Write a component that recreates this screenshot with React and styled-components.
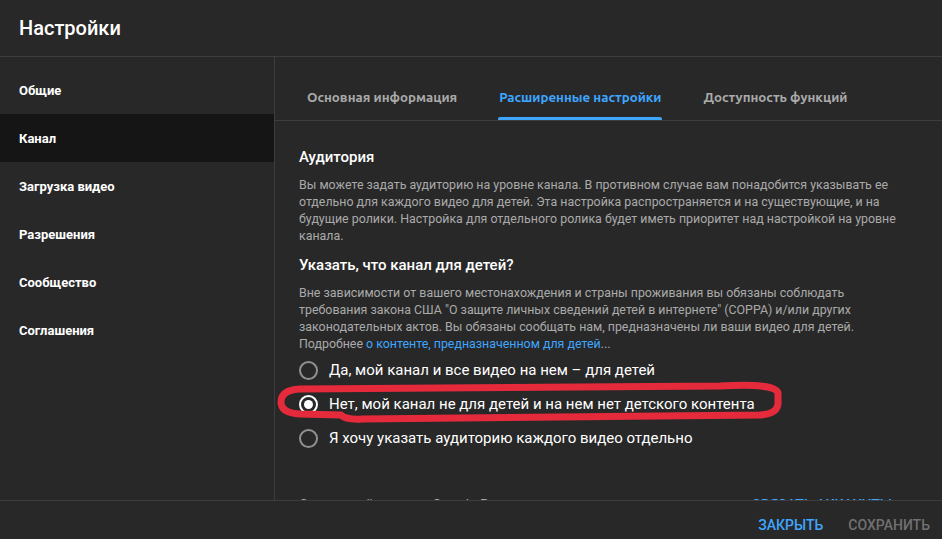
import React from "react";
import styled, { createGlobalStyle } from "styled-components";

const GlobalStyle = createGlobalStyle`
  html, body { margin: 0; padding: 0; background: #282828; }
  body { font-family: Roboto, "Noto Sans", Arial, sans-serif; color: #fff; }
  * { box-sizing: border-box; }
`;

const Dialog = styled.div`
  width: 942px;
  height: 539px;
  display: flex;
  flex-direction: column;
  background: #282828;
  overflow: hidden;
`;

const Header = styled.header`
  height: 57px;
  flex: none;
  display: flex;
  align-items: center;
  padding: 0 19px;
  border-bottom: 1px solid #3d3d3d;
`;

const Title = styled.h1`
  margin: 0;
  font-size: 20px;
  font-weight: 500;
  color: #fff;
`;

const Body = styled.div`
  flex: 1;
  display: flex;
  min-height: 0;
`;

const Sidebar = styled.nav`
  width: 275px;
  flex: none;
  padding-top: 9px;
  border-right: 1px solid #3d3d3d;
  display: flex;
  flex-direction: column;
`;

const NavItem = styled.div`
  height: 48px;
  display: flex;
  align-items: center;
  padding: 0 19px;
  font-size: 13px;
  font-weight: 700;
  color: #fff;
  background: ${(p) => (p.$active ? "#151515" : "transparent")};
`;

const Main = styled.div`
  flex: 1;
  display: flex;
  flex-direction: column;
  min-width: 0;
  position: relative;
`;

const Tabs = styled.div`
  height: 64px;
  flex: none;
  display: flex;
  align-items: stretch;
  gap: 42px;
  padding-left: 32px;
  border-bottom: 1px solid #3d3d3d;
`;

const Tab = styled.div`
  position: relative;
  display: flex;
  align-items: center;
  padding-top: 17px;
  font-family: Ubuntu, "Noto Sans", Roboto, sans-serif;
  font-size: 13.3px;
  font-weight: 600;
  color: ${(p) => (p.$active ? "#3ea6ff" : "#aaaaaa")};
  &::after {
    content: "";
    display: ${(p) => (p.$active ? "block" : "none")};
    position: absolute;
    left: -1px;
    right: 0;
    bottom: 0;
    height: 3px;
    border-radius: 2px 2px 0 0;
    background: #3ea6ff;
  }
`;

const Content = styled.div`
  flex: 1;
  overflow: hidden;
  padding: 26px 24px 0 24px;
  position: relative;
`;

const SectionTitle = styled.h2`
  margin: 0 0 9px;
  font-size: 15px;
  font-weight: 500;
  color: #fff;
  line-height: 20px;
`;

const Paragraph = styled.p`
  margin: 0 0 ${(p) => p.$mb || 0}px;
  font-size: 12.4px;
  line-height: 17px;
  color: #aaaaaa;
  max-width: 600px;
`;

const Link = styled.a`
  color: #3ea6ff;
  text-decoration: none;
`;

const Options = styled.div`
  display: flex;
  flex-direction: column;
  margin-top: 1px;
`;

const Option = styled.label`
  height: 34px;
  display: flex;
  align-items: center;
  gap: 11px;
  font-size: 15px;
  color: #fff;
`;

const Radio = styled.span`
  width: 19px;
  height: 19px;
  flex: none;
  border-radius: 50%;
  border: 2px solid ${(p) => (p.$checked ? "#fff" : "#909090")};
  display: flex;
  align-items: center;
  justify-content: center;
  &::after {
    content: "";
    width: 9px;
    height: 9px;
    border-radius: 50%;
    background: #fff;
    display: ${(p) => (p.$checked ? "block" : "none")};
  }
`;

const LinkedRow = styled.div`
  margin-top: 42px;
  display: flex;
  justify-content: space-between;
  padding-right: 26px;
  font-size: 14px;
`;

const LinkedText = styled.span`
  color: #aaaaaa;
`;

const LinkedButton = styled.span`
  color: #3ea6ff;
  font-weight: 500;
  text-transform: uppercase;
`;

const Footer = styled.footer`
  height: 39px;
  flex: none;
  display: flex;
  justify-content: flex-end;
  align-items: center;
  gap: 25px;
  padding: 9px 12px 0 0;
  border-top: 1px solid #3d3d3d;
`;

const FooterButton = styled.span`
  font-size: 14px;
  font-weight: 500;
  text-transform: uppercase;
  color: ${(p) => (p.$primary ? "#3ea6ff" : "#717171")};
`;

const Scribble = styled.svg`
  position: absolute;
  left: 0;
  top: 0;
  width: 942px;
  height: 539px;
  pointer-events: none;
`;

export default function App() {
  const nav = ["Общие", "Канал", "Загрузка видео", "Разрешения", "Сообщество", "Соглашения"];
  return (
    <>
      <GlobalStyle />
      <Dialog>
        <Header>
          <Title>Настройки</Title>
        </Header>
        <Body>
          <Sidebar>
            {nav.map((n) => (
              <NavItem key={n} $active={n === "Канал"}>{n}</NavItem>
            ))}
          </Sidebar>
          <Main>
            <Tabs>
              <Tab>Основная информация</Tab>
              <Tab $active>Расширенные настройки</Tab>
              <Tab>Доступность функций</Tab>
            </Tabs>
            <Content>
              <SectionTitle>Аудитория</SectionTitle>
              <Paragraph $mb={11}>
                Вы можете задать аудиторию на уровне канала. В противном случае вам понадобится указывать ее
                отдельно для каждого видео для детей. Эта настройка распространяется и на существующие, и на
                будущие ролики. Настройка для отдельного ролика будет иметь приоритет над настройкой на уровне
                канала.
              </Paragraph>
              <SectionTitle>Указать, что канал для детей?</SectionTitle>
              <Paragraph>
                Вне зависимости от вашего местонахождения и страны проживания вы обязаны соблюдать
                требования закона США "О защите личных сведений детей в интернете" (COPPA) и/или других
                законодательных актов. Вы обязаны сообщать нам, предназначены ли ваши видео для детей.
                Подробнее <Link>о контенте, предназначенном для детей</Link>...
              </Paragraph>
              <Options>
                <Option><Radio />Да, мой канал и все видео на нем – для детей</Option>
                <Option><Radio $checked />Нет, мой канал не для детей и на нем нет детского контента</Option>
                <Option><Radio />Я хочу указать аудиторию каждого видео отдельно</Option>
              </Options>
              <LinkedRow>
                <LinkedText>Связанный аккаунт Google Рекламы</LinkedText>
                <LinkedButton>Связать аккаунты</LinkedButton>
              </LinkedRow>
            </Content>
          </Main>
        </Body>
        <Footer>
          <FooterButton $primary>Закрыть</FooterButton>
          <FooterButton>Сохранить</FooterButton>
        </Footer>
      </Dialog>
      <Scribble viewBox="0 0 942 539">
        <path
          d="M 300 389 L 720 386 Q 776 383 778 393 L 778 404 Q 777 414 760 415 L 362 419 Q 346 420 341 415 L 300 414 Q 281 413 281 402 Q 281 390 300 389 Z"
          fill="none"
          stroke="#e52a3c"
          strokeWidth="7"
          strokeLinejoin="round"
        />
      </Scribble>
    </>
  );
}
